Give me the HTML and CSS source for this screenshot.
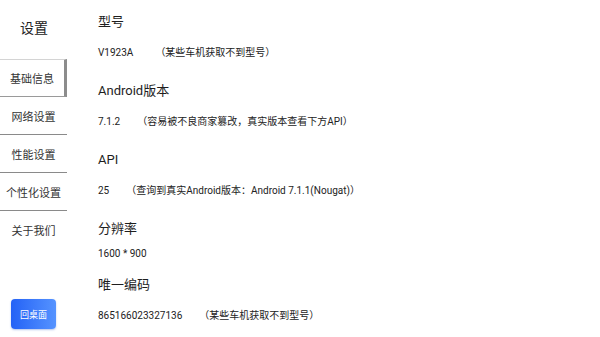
FILE: index.html
```html
<!DOCTYPE html>
<html lang="zh">
<head>
<meta charset="utf-8">
<link rel="stylesheet" href="styles.css">
</head>
<body>
<div class="app">
  <aside class="sidebar">
    <div class="title">设置</div>
    <nav class="menu">
      <div class="item active">基础信息</div>
      <div class="item">网络设置</div>
      <div class="item">性能设置</div>
      <div class="item">个性化设置</div>
      <div class="item last">关于我们</div>
    </nav>
    <div class="btn">回桌面</div>
  </aside>
  <main class="content">
    <section class="sec">
      <h2 class="head">型号</h2>
      <div class="val"><span class="v">V1923A</span><span class="note wide">（某些车机获取不到型号）</span></div>
    </section>
    <section class="sec">
      <h2 class="head">Android版本</h2>
      <div class="val"><span class="v">7.1.2</span><span class="note">（容易被不良商家篡改，真实版本查看下方API）</span></div>
    </section>
    <section class="sec">
      <h2 class="head">API</h2>
      <div class="val"><span class="v">25</span><span class="note">（查询到真实Android版本：Android 7.1.1(Nougat)）</span></div>
    </section>
    <section class="sec plain">
      <h2 class="head">分辨率</h2>
      <div class="val"><span class="v">1600 * 900</span></div>
    </section>
    <section class="sec">
      <h2 class="head">唯一编码</h2>
      <div class="val"><span class="v">865166023327136</span><span class="note">（某些车机获取不到型号）</span></div>
    </section>
  </main>
</div>
</body>
</html>
```
FILE: styles.css
```css
html, body {
  margin: 0;
  padding: 0;
  background: #ffffff;
}
body {
  font-family: Roboto, "Noto Sans CJK SC", sans-serif;
  color: #222222;
}
.app {
  display: flex;
  width: 600px;
  height: 337px;
  overflow: hidden;
}
.sidebar {
  width: 68px;
  flex: none;
  display: flex;
  flex-direction: column;
}
.title {
  height: 59px;
  display: flex;
  align-items: center;
  justify-content: center;
  font-size: 14px;
  color: #222;
  padding-bottom: 5px;
  box-sizing: border-box;
}
.menu {
  display: flex;
  flex-direction: column;
}
.item {
  height: 38px;
  display: flex;
  align-items: center;
  justify-content: center;
  font-size: 11px;
  color: #333;
  border-bottom: 1px solid #8a8a8a;
  box-sizing: border-box;
  width: 67px;
}
.item.active {
  border-top: 1px solid #d4d4d4;
  border-bottom: 1px solid #9a9a9a;
  border-right: 3px solid #8c8c8c;
}
.item.last {
  border-bottom: none;
}
.btn {
  margin-top: auto;
  margin-left: 11px;
  margin-bottom: 8px;
  width: 45px;
  height: 30px;
  border-radius: 4px;
  background: linear-gradient(90deg, #2462f6, #5593ff);
  box-shadow: 0 1px 2px rgba(40, 90, 200, 0.35);
  color: #ffffff;
  font-size: 9px;
  display: flex;
  align-items: center;
  justify-content: center;
}
.content {
  flex: 1;
  padding-left: 30px;
  padding-top: 12px;
}
.sec {
  margin-bottom: 21px;
}
.head {
  margin: 0;
  font-weight: normal;
  font-size: 13px;
  line-height: 20px;
  color: #1e1e1e;
}
.val {
  margin-top: 14px;
  font-size: 10px;
  line-height: 14px;
  display: flex;
  color: #222;
}
.note {
  margin-left: 17px;
}
.note.wide {
  margin-left: 22px;
}
.sec.plain {
  margin-bottom: 14px;
}
.sec.plain .val {
  margin-top: 8px;
}
```
